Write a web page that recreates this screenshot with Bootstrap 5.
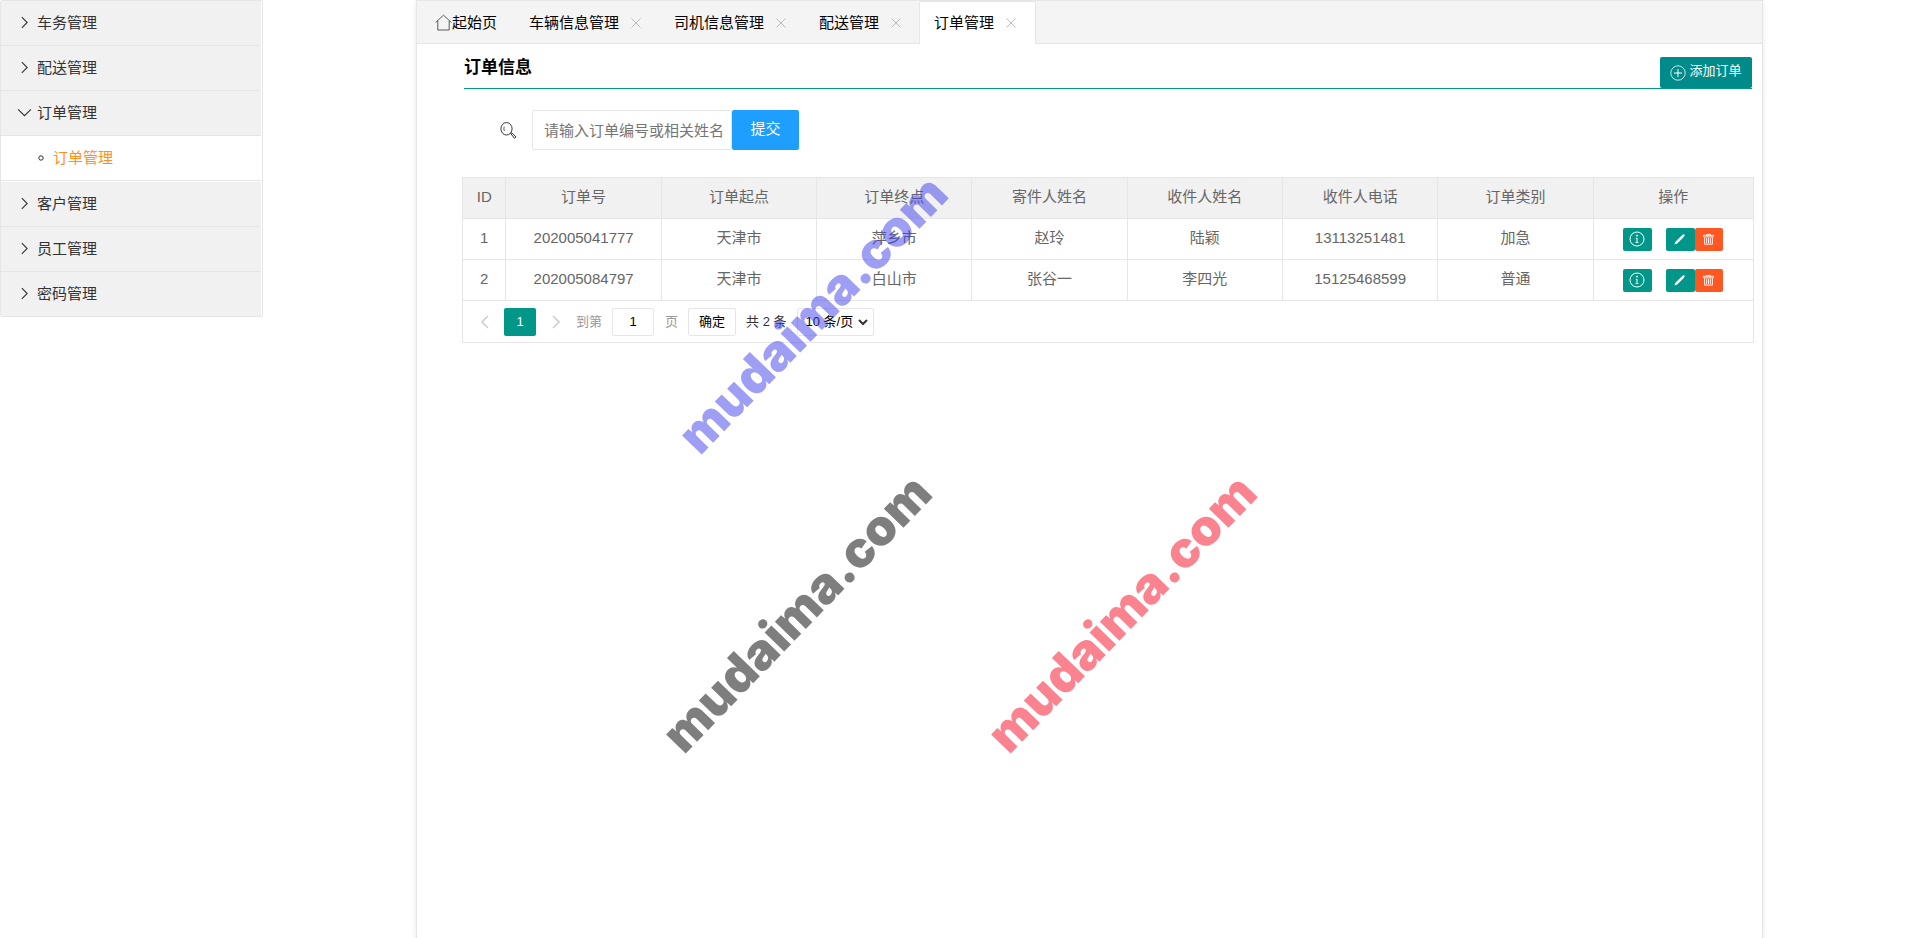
<!DOCTYPE html>
<html lang="zh-CN">
<head>
<meta charset="utf-8">
<meta name="viewport" content="width=device-width, initial-scale=1">
<title>订单管理</title>
<link href="https://cdn.jsdelivr.net/npm/bootstrap@5.3.0/dist/css/bootstrap.min.css" rel="stylesheet">
<style>
  :root { --line: #e6e6e6; --teal: #009688; }
  body { font-family: "Liberation Sans", "Noto Sans CJK SC", sans-serif; font-size: 15px; line-height: 24px; color: #333; background: #fff; }
  svg { fill: none; stroke: currentColor; flex: none; display: block; }
  .side-menu { width: 263px; border: 1px solid var(--line); border-radius: 2px; padding-right: 1px; }
  .side-menu a { height: 45px; border-bottom: 1px solid var(--line); color: #333; text-decoration: none; }
  .side-menu .group-link { background: #f1f1f1; padding-left: 16px; padding-bottom: 1px; gap: 5px; }
  .side-menu .sub-link { padding-left: 37px; gap: 9px; margin-bottom: 1px; }
  .side-menu .sub-link span { color: #ff8f1f; }
  .side-menu li:last-child a { border-bottom: 0; height: 44px; }
  .work-panel { margin-left: 153px; margin-right: 157px; border: 1px solid var(--line); border-bottom: 0; box-shadow: 0 2px 5px rgba(0,0,0,.1); }
  .tab-strip { height: 43px; background: #f4f4f4; border-bottom: 1px solid var(--line); padding-left: 3px; }
  .tab-strip .nav-item { height: 43px; padding: 0 15px; }
  .tab-strip .nav-item:first-child { min-width: 94px; }
  .tab-strip .nav-item a { color: #000; text-decoration: none; }
  .tab-strip .on { background: #fff; border: 1px solid var(--line); border-bottom: 0; border-radius: 2px 2px 0 0; padding: 0 16px 0 14px; }
  .close-tab { width: 16px; margin-left: 9px; color: #bbb; border: 0; background: none; padding: 0; }
  .content-area { padding: 13px 8px 0 45px; }
  .head-row { border-bottom: 1px solid var(--teal); margin-left: 2px; margin-right: 2px; height: 32px; }
  .head-row h1 { font-size: 17px; line-height: 22px; color: #000; }
  .btn { --bs-btn-border-radius: 2px; --bs-btn-border-width: 0; --bs-btn-color: #fff; --bs-btn-hover-color: #fff; }
  .btn-add { background: #008b8b; height: 31px; width: 92px; font-size: 13px; line-height: 20px; padding: 0; gap: 3px; }
  .search-row { margin: 21px 0 27px 38px; }
  .search-row .form-control { width: 200px; height: 40px; border-color: var(--line); border-radius: 2px; font-size: 15px; padding: 0 0 0 11px; color: #333; }
  .search-row .form-control::placeholder { color: #757575; }
  .search-row label { margin-right: 15px; }
  .btn-send { background: #1e9fff; width: 67px; height: 40px; font-size: 15px; padding: 0 0 2px; }
  .grid-box { border: 1px solid var(--line); border-top: 0; }
  .grid-box table { table-layout: fixed; border-collapse: collapse; width: 100%; color: #666; }
  .grid-box th, .grid-box td { height: 41px; border: 1px solid var(--line); padding: 0 0 2px; text-align: center; font-weight: 400; line-height: 24px; }
  .grid-box td:last-child { padding: 0; }
  .grid-box tr > :first-child { border-left: 0; }
  .grid-box tr > :last-child { border-right: 0; }
  .grid-box th { background: #f1f1f1; }
  .act { height: 23px; width: 29px; padding: 0 2px 0 0; }
  .act-view { background: var(--teal); margin-right: 14px; }
  .act-edit { background: var(--teal); }
  .act-drop { background: #ff5722; width: 28px; }
  .pager { height: 41px; font-size: 13px; padding: 0 9px; }
  .pager button, .pager input, .pager select { height: 28px; font-size: 13px; border: 1px solid var(--line); border-radius: 2px; background: #fff; color: #000; padding: 0; text-align: center; }
  .pager .flip { width: 32px; border: 0; color: #ccc; }
  .pager .flip.prev { padding-right: 7px; }
  .pager .flip.next { padding-left: 7px; }
  .pager .current { width: 32px; background: var(--teal); border: 0; color: #fff; }
  .pager .jump { width: 42px; margin: 0 11px 0 10px; }
  .pager .confirm { width: 48px; margin: 0 10px; }
  .pager .form-select { width: 77px; text-align: left; padding: 0 0 0 8px; background: none; }
  .page-size { position: relative; margin-left: 10px; }
  .page-size svg { position: absolute; right: 6px; top: 10px; pointer-events: none; }
  .soft { color: #999; }
  .stamp { position: absolute; font: 900 50px/50px Inter, sans-serif; white-space: nowrap; transform-origin: 0 100%; transform: rotate(-46deg); pointer-events: none; opacity: .5; }
</style>
</head>
<body>
<svg width="0" height="0" class="position-absolute" aria-hidden="true">
  <symbol id="i-right" viewBox="0 0 14 14"><path d="M4.500 2 9.500 7 4.500 12"/></symbol>
  <symbol id="i-down" viewBox="0 0 14 14"><path d="M1 4 7 10 13 4"/></symbol>
  <symbol id="i-x" viewBox="0 0 12 12"><path d="M1.500 1.500 10.500 10.500M10.500 1.500 1.500 10.500"/></symbol>
  <symbol id="i-info" viewBox="0 0 16 16"><circle cx="8" cy="8" r="7"/><path d="M8 7v4.500M6.800 7.300H8M6.600 11.500h2.800"/><circle cx="8" cy="4.600" r=".6" fill="currentColor"/></symbol>
  <symbol id="i-pen" viewBox="0 0 14 14"><path d="M1.500 12.500 2.600 9.300 9.400 2.800Q11.500 1 12.400 1.600 13.200 2.500 11.300 4.600L4.600 11.300Z" fill="currentColor" stroke="none"/></symbol>
  <symbol id="i-bin" viewBox="0 0 14 14"><path d="M1.500 3.500v-1h11v1Q12.500 4.200 11.500 4.200H2.500Q1.500 4.200 1.500 3.500M5 2.500V1.500h4v1M2.800 4.500v7.500h8.400V4.500M5 5.500v5.500M7 5.500v5.500M9 5.500v5.500"/></symbol>
</svg>
<div class="d-flex align-items-start min-vh-100 position-relative">
  <nav class="side-menu flex-shrink-0">
    <ul class="list-unstyled m-0">
      <li><a href="#" class="group-link d-flex align-items-center"><svg width="15" height="15"><use href="#i-right"/></svg>车务管理</a></li>
      <li><a href="#" class="group-link d-flex align-items-center"><svg width="15" height="15"><use href="#i-right"/></svg>配送管理</a></li>
      <li><a href="#" class="group-link d-flex align-items-center"><svg width="15" height="15"><use href="#i-down"/></svg>订单管理</a>
        <a href="#" class="sub-link d-flex align-items-center"><svg width="6" height="6" viewBox="0 0 6 6" stroke="#666"><circle cx="3" cy="3" r="2.200"/></svg><span>订单管理</span></a></li>
      <li><a href="#" class="group-link d-flex align-items-center"><svg width="15" height="15"><use href="#i-right"/></svg>客户管理</a></li>
      <li><a href="#" class="group-link d-flex align-items-center"><svg width="15" height="15"><use href="#i-right"/></svg>员工管理</a></li>
      <li><a href="#" class="group-link d-flex align-items-center"><svg width="15" height="15"><use href="#i-right"/></svg>密码管理</a></li>
    </ul>
  </nav>

  <main class="work-panel flex-grow-1 min-vh-100">
    <ul class="tab-strip nav flex-nowrap">
      <li class="nav-item d-flex align-items-center"><svg width="17" height="17" viewBox="0 0 17 17" stroke-width=".8"><path d="M.6 8.500 8.500 1.200 16.400 8.500M2.800 7v9h11.400V7"/></svg><a href="#">起始页</a></li>
      <li class="nav-item d-flex align-items-center"><a href="#">车辆信息管理</a><button class="close-tab" aria-label="关闭"><svg class="m-auto" width="12" height="12"><use href="#i-x"/></svg></button></li>
      <li class="nav-item d-flex align-items-center"><a href="#">司机信息管理</a><button class="close-tab" aria-label="关闭"><svg class="m-auto" width="12" height="12"><use href="#i-x"/></svg></button></li>
      <li class="nav-item d-flex align-items-center"><a href="#">配送管理</a><button class="close-tab" aria-label="关闭"><svg class="m-auto" width="12" height="12"><use href="#i-x"/></svg></button></li>
      <li class="nav-item on d-flex align-items-center"><a href="#">订单管理</a><button class="close-tab" aria-label="关闭"><svg class="m-auto" width="12" height="12"><use href="#i-x"/></svg></button></li>
    </ul>

    <div class="content-area">
      <div class="head-row d-flex justify-content-between align-items-start">
        <h1 class="m-0 fw-bold">订单信息</h1>
        <button class="btn btn-add d-flex align-items-center justify-content-center"><svg width="16" height="16" viewBox="0 0 16 16"><circle cx="8" cy="8" r="7.200" stroke-width=".8"/><path d="M8 4v8M4 8h8"/></svg><span class="pb-1">添加订单</span></button>
      </div>

      <form class="search-row d-flex align-items-center" onsubmit="return false">
        <label for="keyword" aria-label="搜索"><svg width="17" height="17" viewBox="0 0 17 17"><ellipse cx="6.500" cy="6.800" rx="5.600" ry="6.200"/><path d="M4.200 4.600Q3.400 6.800 4.400 9" stroke-width=".8"/><path d="M10.600 11.500 12 10.800l4 4.200-1.600 1.300-3.500-4.600"/></svg></label>
        <input id="keyword" type="text" class="form-control" placeholder="请输入订单编号或相关姓名">
        <button class="btn btn-send">提交</button>
      </form>

      <div class="grid-box">
        <table>
          <colgroup><col style="width:3.330%"><col style="width:12.040%"><col style="width:12.040%"><col style="width:12.040%"><col style="width:12.040%"><col style="width:12.040%"><col style="width:12.040%"><col style="width:12.040%"><col style="width:12.390%"></colgroup>
          <thead>
            <tr><th>ID</th><th>订单号</th><th>订单起点</th><th>订单终点</th><th>寄件人姓名</th><th>收件人姓名</th><th>收件人电话</th><th>订单类别</th><th>操作</th></tr>
          </thead>
          <tbody>
            <tr><td>1</td><td>202005041777</td><td>天津市</td><td>萍乡市</td><td>赵玲</td><td>陆颖</td><td>13113251481</td><td>加急</td>
              <td><div class="d-flex justify-content-center"><button class="btn act act-view" aria-label="查看"><svg class="m-auto" width="16" height="16"><use href="#i-info"/></svg></button><button class="btn act act-edit" aria-label="编辑"><svg class="m-auto" width="13" height="13"><use href="#i-pen"/></svg></button><button class="btn act act-drop" aria-label="删除"><svg class="m-auto" width="13" height="13"><use href="#i-bin"/></svg></button></div></td></tr>
            <tr><td>2</td><td>202005084797</td><td>天津市</td><td>白山市</td><td>张谷一</td><td>李四光</td><td>15125468599</td><td>普通</td>
              <td><div class="d-flex justify-content-center"><button class="btn act act-view" aria-label="查看"><svg class="m-auto" width="16" height="16"><use href="#i-info"/></svg></button><button class="btn act act-edit" aria-label="编辑"><svg class="m-auto" width="13" height="13"><use href="#i-pen"/></svg></button><button class="btn act act-drop" aria-label="删除"><svg class="m-auto" width="13" height="13"><use href="#i-bin"/></svg></button></div></td></tr>
          </tbody>
        </table>
        <div class="pager d-flex align-items-center">
          <button class="flip prev" aria-label="上一页"><svg class="m-auto" width="16" height="16" viewBox="0 0 16 16" stroke-width="1.500"><path d="M11 2 5 8l6 6"/></svg></button>
          <button class="current">1</button>
          <button class="flip next me-2" aria-label="下一页"><svg class="m-auto" width="16" height="16" viewBox="0 0 16 16" stroke-width="1.500"><path d="M5 2l6 6-6 6"/></svg></button>
          <label for="page-no" class="soft">到第</label>
          <input id="page-no" class="jump" type="text" value="1">
          <span class="soft">页</span>
          <button class="confirm">确定</button>
          <span>共 2 条</span>
          <div class="page-size">
            <select class="form-select" aria-label="每页条数"><option>10 条/页</option></select>
            <svg width="10" height="8" viewBox="0 0 10 8" stroke="#000" stroke-width="2"><path d="M1 2l4 4 4-4"/></svg>
          </div>
        </div>
      </div>
    </div>
  </main>

  <!-- translucent site marks floating over the page -->
  <span class="stamp" style="left:705px;top:411px;color:#4040ec">mudaima.com</span>
  <span class="stamp" style="left:689px;top:710px;color:#000">mudaima.com</span>
  <span class="stamp" style="left:1014px;top:710px;color:#f60a22">mudaima.com</span>
</div>
<script src="https://cdn.jsdelivr.net/npm/bootstrap@5.3.0/dist/js/bootstrap.bundle.min.js"></script>
</body>
</html>
